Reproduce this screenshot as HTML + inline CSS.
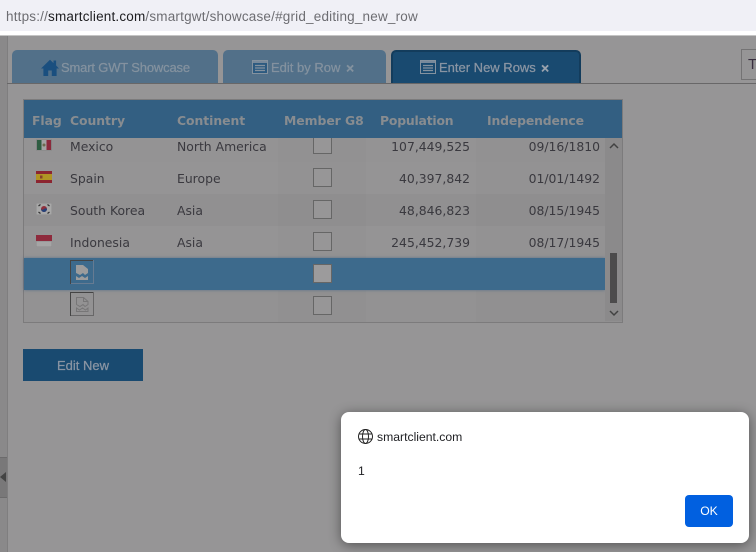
<!DOCTYPE html>
<html><head><meta charset="utf-8">
<style>
html,body{margin:0;padding:0}
body{width:756px;height:552px;position:relative;overflow:hidden;background:#969596;font-family:"DejaVu Sans","Liberation Sans",sans-serif}
.a{position:absolute;white-space:nowrap}
.t{position:absolute;white-space:nowrap;font-size:12.4px;line-height:16px;color:#3a393f;margin-top:1px}
.r{text-align:right}
.h{position:absolute;white-space:nowrap;font-size:12.4px;line-height:16px;font-weight:bold;color:#888c90;top:113px;font-family:"DejaVu Sans",sans-serif;letter-spacing:-.05px}
.tab{position:absolute;top:50px;height:33px;border-radius:5px 5px 0 0;box-sizing:border-box}
.tl{position:absolute;top:60px;font-size:13px;line-height:16px;color:#84929f;white-space:nowrap;font-family:"Liberation Sans",sans-serif;-webkit-text-stroke:.25px currentColor}
.cb{position:absolute;left:313px;width:17px;height:17px;border:1px solid #666;background:#979697}
.c{position:absolute;top:138px;height:184px}
</style></head><body>
<div class="a" style="left:0;top:0;width:756px;height:31px;background:#f0f0f6"></div>
<div class="a" style="left:0;top:31px;width:756px;height:4px;background:#fff"></div>
<div class="a" style="left:0;top:35px;width:756px;height:1px;background:#c4c4c4"></div>
<div class="a" style="left:6px;top:9px;font:13.5px/16px 'Liberation Sans',sans-serif;color:#6d6d72;letter-spacing:.19px">https://<span style="color:#1d1d20">smartclient.com</span>/smartgwt/showcase/#grid_editing_new_row</div>

<div class="a" style="left:0;top:36px;width:7px;height:516px;background:#8a898a"></div>
<div class="a" style="left:7px;top:36px;width:1px;height:516px;background:#7f7e7f"></div>
<div class="a" style="left:0;top:457px;width:7px;height:41px;background:#797879;border-top:1px solid #6c6b6c;border-bottom:1px solid #6c6b6c;box-sizing:border-box"></div>
<div class="a" style="left:0;top:472px;width:0;height:0;border-top:5px solid transparent;border-bottom:5px solid transparent;border-right:6px solid #444"></div>

<div class="tab" style="left:12px;width:206px;background:#527089"></div>
<div class="tab" style="left:223px;width:163px;background:#527089"></div>
<div class="tab" style="left:391px;width:190px;background:#194a70;border:2px solid #133c5c;border-bottom:0"></div>
<div class="a" style="left:7px;top:83px;width:749px;height:1px;background:#686768"></div>
<div class="a" style="left:741px;top:49px;width:20px;height:31px;box-sizing:border-box;border:1px solid #747374"></div>
<div class="a" style="left:748px;top:56px;font:15px/18px 'Liberation Sans',sans-serif;color:#3a3040">T</div>

<svg class="a" style="left:40px;top:59px" width="20" height="18" viewBox="0 0 20 18"><path d="M1 9.500 10 .8l3.500 3.300V1.500h2.600v5L19 9.500h-2.400V17h-4.800v-5.500H8.200V17H3.400V9.500z" fill="#1a4f7f"/></svg>
<div class="tl" style="left:61px;letter-spacing:-.17px">Smart GWT Showcase</div>
<svg class="a" style="left:252px;top:60px" width="16" height="14" viewBox="0 0 16 14"><rect x=".5" y=".5" width="15" height="13" fill="#2c5a80" stroke="#84929f"/><rect x="1" y="1" width="14" height="2" fill="#77899b"/><path d="M3 5.500h10M3 8h10M3 10.500h10" stroke="#84929f" stroke-width="1.200"/></svg>
<div class="tl" style="left:271px">Edit by Row</div>
<div class="tl" style="left:346px;font-weight:bold;font-size:14px">×</div>
<svg class="a" style="left:420px;top:60px" width="16" height="14" viewBox="0 0 16 14"><rect x=".5" y=".5" width="15" height="13" fill="#194a70" stroke="#84929f"/><rect x="1" y="1" width="14" height="2" fill="#77899b"/><path d="M3 5.500h10M3 8h10M3 10.500h10" stroke="#84929f" stroke-width="1.200"/></svg>
<div class="tl" style="left:439px;color:#8a95a3">Enter New Rows</div>
<div class="tl" style="left:541px;font-weight:bold;font-size:14px;color:#9aa3ae">×</div>

<!-- grid -->
<div class="a" style="left:23px;top:99px;width:600px;height:224px;box-sizing:border-box;border:1px solid #7c7b7c;background:#908f90"></div>
<div class="a" style="left:24px;top:100px;width:598px;height:38px;background:#335f82"></div>
<div class="h" style="left:32px">Flag</div>
<div class="h" style="left:70px">Country</div>
<div class="h" style="left:177px">Continent</div>
<div class="h" style="left:284px">Member G8</div>
<div class="h" style="left:380px;letter-spacing:-.2px">Population</div>
<div class="h" style="left:487px;letter-spacing:-.15px">Independence</div>

<div class="a" style="left:24px;top:138px;width:581px;height:24px;background:#949394"></div>
<div class="a" style="left:24px;top:162px;width:581px;height:32px;background:#959495"></div>
<div class="a" style="left:24px;top:194px;width:581px;height:32px;background:#919091"></div>
<div class="a" style="left:24px;top:226px;width:581px;height:32px;background:#959495"></div>
<div class="a" style="left:24px;top:290px;width:581px;height:32px;background:#939293"></div>
<div class="c" style="left:278px;width:88px;background:rgba(0,0,0,.01)"></div>
<div class="c" style="left:476px;width:129px;background:rgba(0,0,0,.006)"></div>
<div class="a" style="left:24px;top:258px;width:581px;height:32px;background:#3d6a8c;box-shadow:0 0 3px rgba(50,90,130,.6)"></div>

<!-- scrollbar -->
<div class="a" style="left:605px;top:138px;width:17px;height:183px;background:#8b8a8b"></div>
<div class="a" style="left:610px;top:253px;width:7px;height:50px;background:#4c4b4c"></div>
<svg class="a" style="left:608px;top:142px" width="12" height="8" viewBox="0 0 12 8"><path d="M2 6 6 2l4 4" fill="none" stroke="#424242" stroke-width="1.500"/></svg>
<svg class="a" style="left:608px;top:309px" width="12" height="8" viewBox="0 0 12 8"><path d="M2 2l4 4 4-4" fill="none" stroke="#424242" stroke-width="1.500"/></svg>

<!-- flags -->
<svg class="a" style="left:36px;top:139px" width="16" height="12" viewBox="0 0 16 12"><rect width="16" height="11" y=".5" fill="#858485"/><rect x="1" y="1" width="4.500" height="10" fill="#2f5d42"/><rect x="5.500" y="1" width="5" height="10" fill="#a3a3a3"/><rect x="10.500" y="1" width="4.500" height="10" fill="#8b2a3c"/><circle cx="8" cy="6" r="1.500" fill="#6c6a4e"/></svg>
<svg class="a" style="left:36px;top:171px" width="16" height="12" viewBox="0 0 16 12"><rect width="16" height="12" fill="#8c2530"/><rect y="3" width="16" height="6" fill="#b09424"/><rect x="4" y="4.500" width="2.500" height="3" fill="#87402c"/></svg>
<svg class="a" style="left:36px;top:203px" width="16" height="12" viewBox="0 0 16 12"><rect width="16" height="12" fill="#8d8c8d"/><rect x=".5" y=".5" width="15" height="11" fill="#a8a8a8"/><circle cx="8" cy="6" r="3" fill="#8f2f3c"/><path d="M5 6a3 3 0 0 0 6 0q-1.500-1.500-3 0t-3 0z" fill="#23427a"/><path d="M2.500 3 4.500 1.500M2.500 9l2 1.500M13.500 3l-2-1.500M13.500 9l-2 1.500" stroke="#333" stroke-width="1.200"/></svg>
<svg class="a" style="left:36px;top:235px" width="16" height="12" viewBox="0 0 16 12"><rect width="16" height="12" fill="#8d8c8d"/><rect width="16" height="6" fill="#8e2a3c"/><rect x=".5" y="6.500" width="15" height="5" fill="#a5a5a5"/></svg>

<!-- text rows -->
<div class="t" style="left:70px;top:138px">Mexico</div><div class="t" style="left:177px;top:138px">North America</div>
<div class="t r" style="left:366px;width:104px;top:138px">107,449,525</div><div class="t r" style="left:476px;width:124px;top:138px">09/16/1810</div>
<div class="t" style="left:70px;top:170px">Spain</div><div class="t" style="left:177px;top:170px">Europe</div>
<div class="t r" style="left:366px;width:104px;top:170px">40,397,842</div><div class="t r" style="left:476px;width:124px;top:170px">01/01/1492</div>
<div class="t" style="left:70px;top:202px">South Korea</div><div class="t" style="left:177px;top:202px">Asia</div>
<div class="t r" style="left:366px;width:104px;top:202px">48,846,823</div><div class="t r" style="left:476px;width:124px;top:202px">08/15/1945</div>
<div class="t" style="left:70px;top:234px">Indonesia</div><div class="t" style="left:177px;top:234px">Asia</div>
<div class="t r" style="left:366px;width:104px;top:234px">245,452,739</div><div class="t r" style="left:476px;width:124px;top:234px">08/17/1945</div>

<!-- checkboxes -->
<div class="a" style="left:313px;top:138px;width:19px;height:17px;overflow:hidden"><div class="cb" style="left:0;top:-3px"></div></div>
<div class="cb" style="top:168px"></div>
<div class="cb" style="top:200px"></div>
<div class="cb" style="top:232px"></div>
<div class="cb" style="top:264px;background:#9c9b9c"></div>
<div class="cb" style="top:296px"></div>

<!-- broken image icons -->
<svg class="a" style="left:70px;top:260px" width="24" height="24" viewBox="0 0 24 24"><path d="M.5 24V.5H24" fill="none" stroke="#444"/><path d="M23.500 0V23.500H1" fill="none" stroke="#667b92"/><path d="M6 5h7l5 4v4l-3 2-2-2-3 2-4-2z" fill="#9c9c9c"/><path d="M6 16l3 2 3-2 3 2 3-2v4H6z" fill="#9c9c9c"/></svg>
<svg class="a" style="left:70px;top:292px" width="24" height="24" viewBox="0 0 24 24"><path d="M.5 24V.5H24" fill="none" stroke="#444"/><path d="M23.500 0V23.500H1" fill="none" stroke="#686768"/><path d="M6.500 5.500h7l4.500 4v3l-3 2-2-2-3 2-3.500-2z M6.500 16l3 2 3-2 3 2 2.500-2v3.500H6.500z M13.500 5.500v4h4.500" fill="none" stroke="#777677"/></svg>

<!-- Edit New -->
<div class="a" style="left:23px;top:349px;width:120px;height:32px;background:#194a70;text-align:center;font:13px/33px 'Liberation Sans',sans-serif;color:#8a95a3;-webkit-text-stroke:.25px currentColor">Edit New</div>

<!-- dialog -->
<div class="a" style="left:341px;top:412px;width:408px;height:131px;background:#fff;border-radius:8px;box-shadow:0 2px 12px rgba(0,0,0,.45)"></div>
<svg class="a" style="left:358px;top:429px" width="15" height="15" viewBox="0 0 15 15"><g fill="none" stroke="#222" stroke-width="1"><circle cx="7.500" cy="7.500" r="7"/><ellipse cx="7.500" cy="7.500" rx="3" ry="7"/><path d="M1.200 5h12.600M1.200 10h12.600"/></g></svg>
<div class="a" style="left:377px;top:429px;font:12.2px/16px 'Liberation Sans',sans-serif;color:#202124">smartclient.com</div>
<div class="a" style="left:358px;top:463px;font:12.2px/16px 'Liberation Sans',sans-serif;color:#202124">1</div>
<div class="a" style="left:685px;top:495px;width:48px;height:32px;background:#0160e0;border-radius:4px;text-align:center;font:12.2px/33px 'Liberation Sans',sans-serif;color:#fff">OK</div>
</body></html>
